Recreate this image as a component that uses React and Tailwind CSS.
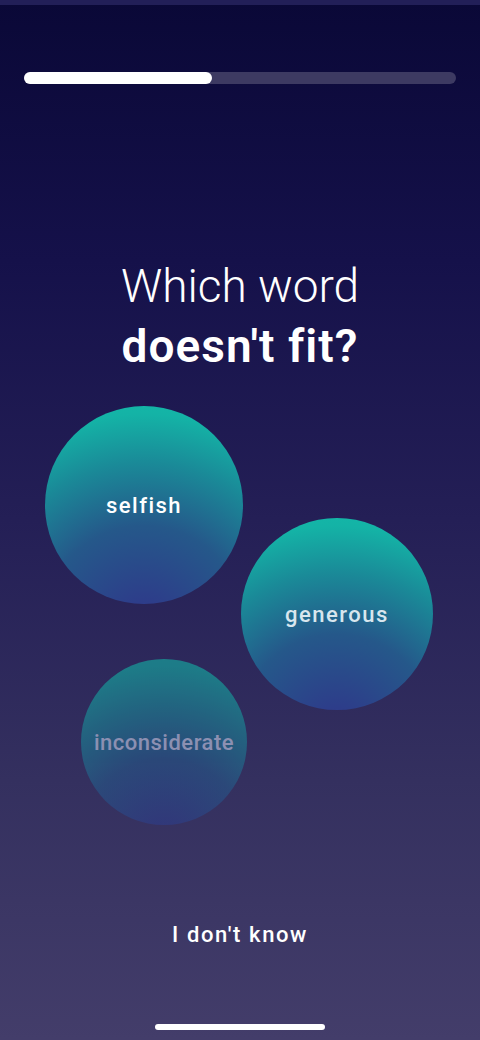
export default function App() {
  const bubbles = [
    { word: "selfish", cls: "left-[45px] top-0 w-[198px] h-[198px]", text: "text-white tracking-[1.5px]" },
    { word: "generous", cls: "left-[241px] top-[112px] w-[192px] h-[192px]", text: "text-[#d8e6ee] tracking-[1.5px]" },
    { word: "inconsiderate", cls: "left-[81px] top-[253px] w-[166px] h-[166px] opacity-60", text: "text-[#c9d2ea] tracking-[0.5px]" },
  ];

  return (
    <div
      className="w-[480px] h-[1040px] flex flex-col bg-[linear-gradient(180deg,#0a0837_0%,#15114a_25%,#241f56_50%,#34305f_75%,#433d6a_100%)] overflow-hidden [font-variant-ligatures:none]"
      style={{ fontFamily: "Roboto, 'Noto Sans', sans-serif" }}
    >
      {/* status strip */}
      <div className="h-[5px] bg-[#221f58]" />

      {/* progress */}
      <div className="mt-[67px] mx-6 h-3 rounded-full bg-[#3d3a62]">
        <div className="h-3 w-[188px] rounded-full bg-white" />
      </div>

      {/* question */}
      <div className="mt-[172px] text-center text-white text-[46px] leading-[60px]">
        <p className="font-light">Which word</p>
        <p className="font-semibold tracking-[1px]">doesn't fit?</p>
      </div>

      {/* bubbles */}
      <div className="relative mt-[30px] h-[420px]">
        {bubbles.map((b) => (
          <button
            key={b.word}
            className={`absolute rounded-full flex items-center justify-center bg-[radial-gradient(circle_at_50%_112%,#30348a_0%,#25588a_42%,#1a8a98_68%,#14b3a6_88%,#13baa8_100%)] ${b.cls}`}
          >
            <span className={`text-[22px] font-medium ${b.text}`}>{b.word}</span>
          </button>
        ))}
      </div>

      {/* skip */}
      <div className="mt-[95px] text-center text-white text-[22px] leading-7 font-medium tracking-[1.6px]">
        I don't know
      </div>

      {/* home indicator */}
      <div className="mt-[75px] mx-auto h-[6px] w-[170px] rounded-full bg-white" />
    </div>
  );
}
